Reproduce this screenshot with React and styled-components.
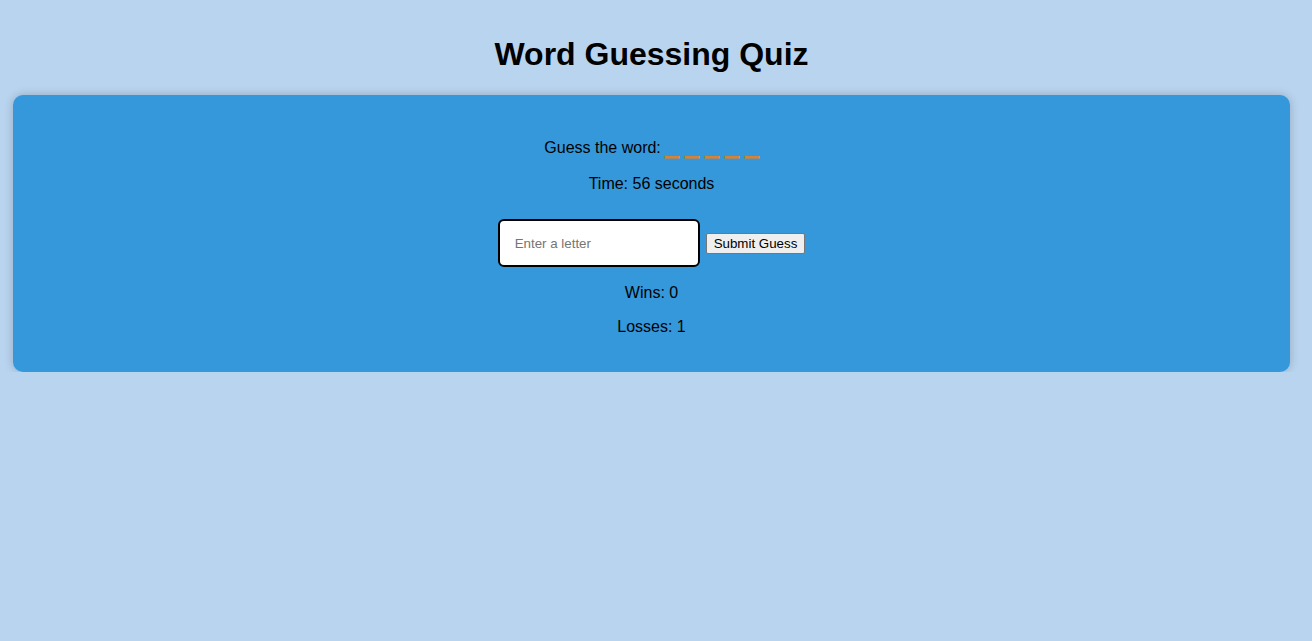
import React, { useState } from "react";
import styled, { createGlobalStyle } from "styled-components";

const GlobalStyle = createGlobalStyle`
  body {
    margin: 0;
    background: #b9d4ef;
    font-family: "Liberation Sans", Arial, sans-serif;
  }
`;

const Page = styled.div`
  padding: 15px 22px 0 13px;
  text-align: center;
`;

const Title = styled.h1`
  font-size: 32px;
  font-weight: bold;
  margin: 21px 0 22px;
  color: #000;
`;

const Panel = styled.div`
  background: #3498db;
  border-radius: 10px;
  box-shadow: 0 0 10px rgba(0, 0, 0, 0.2);
  padding: 20px;
`;

const Line = styled.p`
  font-size: 16px;
  margin: 16px 0;
  color: #000;
`;

const Blanks = styled.span`
  font-size: 24px;
  color: #e67e22;
  -webkit-text-stroke: 0.8px #e67e22;
`;

const GuessRow = styled.div`
  display: flex;
  justify-content: center;
  align-items: center;
  gap: 6px;
  margin: 26px 0 17px;
`;

const LetterInput = styled.input`
  box-sizing: border-box;
  width: 202px;
  height: 48px;
  padding: 0 15px;
  border: 2px solid #000;
  border-radius: 6px;
  font-family: "Liberation Sans", Arial, sans-serif;
  font-size: 13.33px;
  outline: none;
`;

const SubmitButton = styled.button`
  box-sizing: border-box;
  height: 21px;
  font-family: "Liberation Sans", Arial, sans-serif;
  font-size: 13.33px;
  padding: 0 7px;
  background: #efefef;
  border: 1px solid #767676;
  border-radius: 2px;
  color: #000;
`;

export default function App() {
  const [letter, setLetter] = useState("");
  return (
    <Page>
      <GlobalStyle />
      <Title>Word Guessing Quiz</Title>
      <Panel>
        <Line>
          Guess the word: <Blanks>_ _ _ _ _</Blanks>
        </Line>
        <Line>Time: 56 seconds</Line>
        <GuessRow>
          <LetterInput
            placeholder="Enter a letter"
            value={letter}
            maxLength={1}
            onChange={(e) => setLetter(e.target.value)}
          />
          <SubmitButton>Submit Guess</SubmitButton>
        </GuessRow>
        <Line>Wins: 0</Line>
        <Line>Losses: 1</Line>
      </Panel>
    </Page>
  );
}
